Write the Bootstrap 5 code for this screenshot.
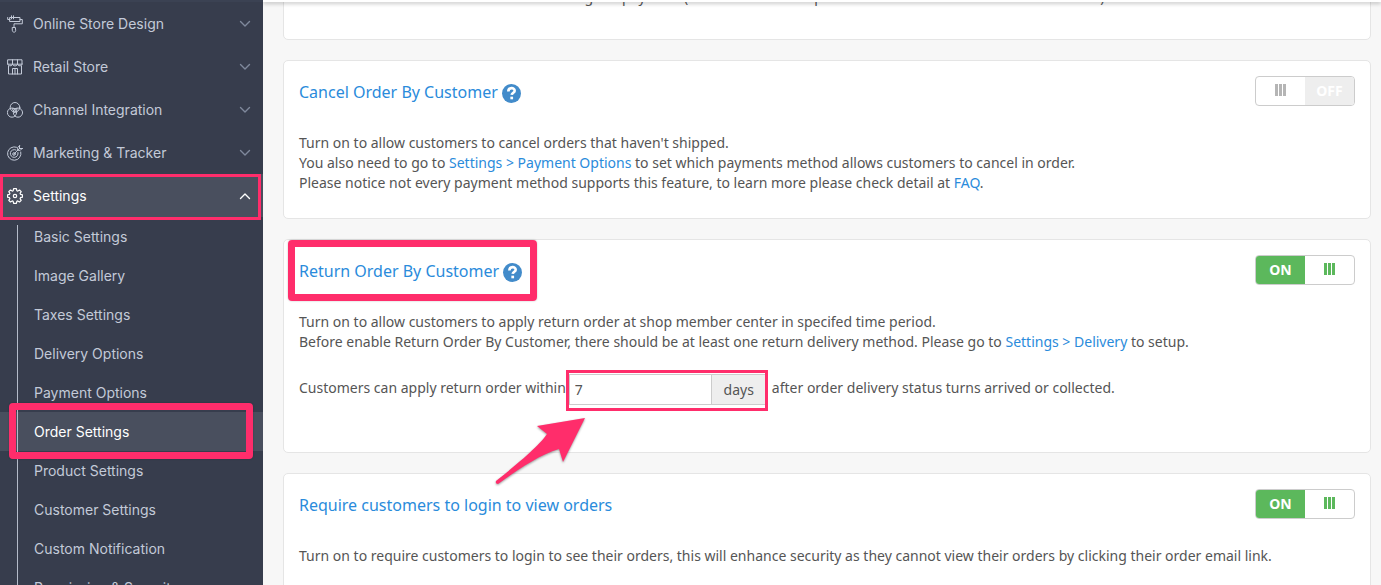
<!DOCTYPE html>
<html lang="en">
<head>
<meta charset="utf-8">
<meta name="viewport" content="width=device-width, initial-scale=1">
<title>Order Settings</title>
<link href="https://cdn.jsdelivr.net/npm/bootstrap@5.3.0/dist/css/bootstrap.min.css" rel="stylesheet">
<style>
  body { font: 14px/20px "Noto Sans", sans-serif; color: #555; background: #f7f7f7; }
  a { color: #2a8bdb; text-decoration: none; }

  /* Sidebar */
  .side { width: 263px; background: #373d4d; border-top: 2px solid #3b4253; font-family: Inter, sans-serif; }
  .side a { color: #c3cad8; }
  .side-item { height: 43px; padding: 0 12px 0 7px; gap: 10px; }
  .side-item svg { flex: none; fill: none; stroke: currentColor; stroke-linecap: round; stroke-linejoin: round; }
  .side-item .chev { color: #7f899c; stroke-width: 1.4; }
  .side-item.open, .side-item.open .chev, .side-sub a.current { color: #fff; }
  .side-item.open, .side-sub a.current { background: #494f5e; }
  .side-sub::before { content: ""; position: absolute; left: 17px; top: 8px; bottom: 0; width: 1px; background: #b4bbc9; z-index: 1; }
  .side-sub a { height: 39px; padding-left: 34px; }

  /* Content */
  .topbar { height: 2px; background: #fff; box-shadow: 0 1px 4px rgba(0,0,0,.4); z-index: 2; }
  .panels { padding: 0 10px 0 20px; gap: 20px; }
  .panel { background: #fff; border: 1px solid #e5e5e5; border-radius: 5px; padding: 15px; }
  .panel-top { margin-top: -31px; padding-bottom: 32px; }
  .panel-cancel { padding-bottom: 25px; }
  .panel-head { height: 30px; margin-bottom: 27px; }
  .panel h2 { font-size: 16px; line-height: 24px; font-weight: 400; color: #2a8bdb; gap: 4px; padding-top: 2px; }
  .help { display: flex; margin-top: 2px; }

  /* On/off switch */
  .toggle { width: 100px; height: 30px; padding: 0; border: 1px solid #ccc; border-radius: 4px; background: #fff; overflow: hidden; font-size: 14px; line-height: 28px; font-weight: 700; color: #5cb85c; }
  .toggle .word { background: #5cb85c; color: #fff; }
  .toggle.off { color: #b5b5b5; }
  .toggle.off .word { background: #eee; color: #fff; }
  .grip { width: 11px; height: 12px; background: repeating-linear-gradient(90deg, currentColor 0 3px, transparent 3px 4px); margin-bottom: 2px; }

  .days-row { line-height: 28px; margin: 22px 0 32px; }
  .days { width: 198px; height: 31px; margin: 0 5px 0 3px; }
  .days .form-control, .days .input-group-text { font-size: 14px; line-height: 20px; border-color: #ccc; border-radius: 0; color: #555; }
  .days .form-control { padding: 4px 5px; }
  .days .input-group-text { background: #eee; padding: 4px 12px; }

  /* Highlights laid over the page */
  .hl { position: absolute; border: 3px solid #ff2d6b; pointer-events: none; z-index: 3; }
  .hl.thick { border-width: 7px; border-radius: 4px; box-shadow: 0 0 2px rgba(0,0,0,.25); }
  .hl-settings { inset: 0 2px -3px 0; }
  .hl-order { inset: -9px 10px -8px 9px; }
  .hl-return { inset: -17px -15px -18px -11px; }
  .hl-days { inset: -4px -1px -6px -2px; }
  .arrow { position: absolute; right: 180px; top: 42px; z-index: 3; filter: drop-shadow(0 1px 1px rgba(0,0,0,.4)); }
</style>
</head>
<body>
<svg class="d-none">
  <symbol id="down" viewBox="0 0 12 8"><path d="M1.5 1.5 6 6l4.500-4.500"/></symbol>
  <symbol id="up" viewBox="0 0 12 8"><path d="M1.500 6.500 6 2l4.500 4.500"/></symbol>
  <symbol id="question" viewBox="0 0 18 18"><circle cx="9" cy="9" r="9" fill="#428bca"/><path d="M6 7c0-4 6-4 6-.7C12 8.300 9.400 8.200 9.200 10.400" fill="none" stroke="#fff" stroke-width="2.500"/><path d="M7.900 12h2.600v2.500H7.900z" fill="#fff"/></symbol>
</svg>
<div class="d-flex vh-100 overflow-hidden">
  <nav class="side flex-shrink-0 overflow-hidden" aria-label="Main menu">
    <a href="#" class="side-item d-flex align-items-center">
      <svg width="16" height="18" viewBox="0 0 16 18"><path d="M3 2.500h10v4H3zM3 4.500H.700v-2M4.500.800v3M6.500.800v3M13 4.500h2.300v4.300H7v3.400M5.600 12.500h2.800l.3 3.200c0 2-3.400 2-3.400 0z"/></svg>
      <span class="flex-grow-1">Online Store Design</span>
      <svg class="chev" width="12" height="8"><use href="#down"/></svg>
    </a>
    <a href="#" class="side-item d-flex align-items-center">
      <svg width="16" height="16" viewBox="0 0 16 16"><path d="M1 .800h14v4.400H1zM5.500.800v4.400M10.500.800v4.400M.700 5c0 2.500 4.800 2.500 4.800 0 0 2.500 5 2.500 5 0 0 2.500 4.800 2.500 4.800 0M1.500 7v8h13V7M5.500 15V9.500h5V15M8 10v5"/></svg>
      <span class="flex-grow-1">Retail Store</span>
      <svg class="chev" width="12" height="8"><use href="#down"/></svg>
    </a>
    <a href="#" class="side-item d-flex align-items-center">
      <svg width="16" height="16" viewBox="0 0 16 16"><circle cx="8" cy="5.300" r="4.800"/><circle cx="5" cy="10.600" r="4.600"/><circle cx="11" cy="10.600" r="4.600"/><path d="m5.700 6.700 4.600 0L8 10.500z"/></svg>
      <span class="flex-grow-1">Channel Integration</span>
      <svg class="chev" width="12" height="8"><use href="#down"/></svg>
    </a>
    <a href="#" class="side-item d-flex align-items-center">
      <svg width="16" height="16" viewBox="0 0 16 16"><path d="M9.500 2.200A6.700 6.700 0 1 0 13.800 7M9 5A3.900 3.900 0 1 0 11 7.500M7 9l5.500-5.500M12.500 3.500V.700M12.500 3.500h3M10.700 5.300V2.500l2-2M10.700 5.300h2.600l2-2"/><circle cx="7" cy="9" r="1.300"/></svg>
      <span class="flex-grow-1">Marketing &amp; Tracker</span>
      <svg class="chev" width="12" height="8"><use href="#down"/></svg>
    </a>
    <div class="position-relative">
      <a href="#" class="side-item open d-flex align-items-center" aria-expanded="true">
        <svg width="16" height="16" viewBox="0 0 16 16" stroke-width="1.200"><path d="M6.600.700h2.800l.4 2 1 .4 1.700-1.100 1.700 1.700-1.100 1.700.4 1 2 .4v2.400l-2 .4-.4 1 1.100 1.700-1.700 1.700-1.700-1.100-1 .4-.4 2H6.600l-.4-2-1-.4-1.700 1.100-1.700-1.700 1.100-1.700-.4-1-2-.4V6.800l2-.4.4-1-1.100-1.700L3.500 2l1.700 1.100 1-.4z"/><circle cx="8" cy="8" r="1.700"/></svg>
        <span class="flex-grow-1">Settings</span>
        <svg class="chev" width="12" height="8"><use href="#up"/></svg>
      </a>
      <span class="hl hl-settings"></span>
    </div>
    <div class="side-sub position-relative">
      <a href="#" class="d-flex align-items-center">Basic Settings</a>
      <a href="#" class="d-flex align-items-center">Image Gallery</a>
      <a href="#" class="d-flex align-items-center">Taxes Settings</a>
      <a href="#" class="d-flex align-items-center">Delivery Options</a>
      <a href="#" class="d-flex align-items-center">Payment Options</a>
      <div class="position-relative">
        <a href="#" class="current d-flex align-items-center" aria-current="page">Order Settings</a>
        <span class="hl thick hl-order"></span>
      </div>
      <a href="#" class="d-flex align-items-center">Product Settings</a>
      <a href="#" class="d-flex align-items-center">Customer Settings</a>
      <a href="#" class="d-flex align-items-center">Custom Notification</a>
      <a href="#" class="d-flex align-items-center">Permission &amp; Security</a>
    </div>
  </nav>

  <div class="flex-grow-1 overflow-hidden">
    <div class="topbar position-relative"></div>
    <main class="panels d-flex flex-column">
      <section class="panel panel-top">
        <p class="mb-0">Turn on to let customers return after making the payment (the orders will be updated if the customer has not checked out).</p>
      </section>

      <section class="panel panel-cancel">
        <div class="panel-head d-flex justify-content-between align-items-center">
          <h2 class="d-flex align-items-center m-0">Cancel Order By Customer <a class="help" href="#" aria-label="Help"><svg width="19" height="19"><use href="#question"/></svg></a></h2>
          <button type="button" class="toggle off d-flex" role="switch" aria-checked="false" aria-label="Cancel Order By Customer"><span class="w-50 h-100 d-flex align-items-center justify-content-center"><span class="grip"></span></span><span class="word w-50 h-100">OFF</span></button>
        </div>
        <p class="mb-0">Turn on to allow customers to cancel orders that haven't shipped.<br>You also need to go to <a href="#">Settings &gt; Payment Options</a> to set which payments method allows customers to cancel in order.<br>Please notice not every payment method supports this feature, to learn more please check detail at <a href="#">FAQ</a>.</p>
      </section>

      <section class="panel">
        <div class="panel-head d-flex justify-content-between align-items-center">
          <h2 class="position-relative d-flex align-items-center m-0">Return Order By Customer <a class="help" href="#" aria-label="Help"><svg width="19" height="19"><use href="#question"/></svg></a><span class="hl thick hl-return"></span></h2>
          <button type="button" class="toggle d-flex" role="switch" aria-checked="true" aria-label="Return Order By Customer"><span class="word w-50 h-100">ON</span><span class="w-50 h-100 d-flex align-items-center justify-content-center"><span class="grip"></span></span></button>
        </div>
        <p class="mb-0">Turn on to allow customers to apply return order at shop member center in specifed time period.<br>Before enable Return Order By Customer, there should be at least one return delivery method. Please go to <a href="#">Settings &gt; Delivery</a> to setup.</p>
        <div class="days-row d-flex">
          <label for="days">Customers can apply return order within</label>
          <div class="days input-group position-relative flex-nowrap">
            <input id="days" class="form-control" type="text" value="7">
            <span class="input-group-text">days</span>
            <span class="hl hl-days"></span>
            <svg class="arrow" width="92" height="70" viewBox="0 0 92 70" fill="#ff2d6b"><path d="M90 2 42 10l10 8C44 30 20 50 1 65q-1 3 2 3C24 53 44 39 64 33l4 13z"/></svg>
          </div>
          <span>after order delivery status turns arrived or collected.</span>
        </div>
      </section>

      <section class="panel">
        <div class="panel-head d-flex justify-content-between align-items-center">
          <h2 class="m-0">Require customers to login to view orders</h2>
          <button type="button" class="toggle d-flex" role="switch" aria-checked="true" aria-label="Require customers to login to view orders"><span class="word w-50 h-100">ON</span><span class="w-50 h-100 d-flex align-items-center justify-content-center"><span class="grip"></span></span></button>
        </div>
        <p>Turn on to require customers to login to see their orders, this will enhance security as they cannot view their orders by clicking their order email link.</p>
      </section>
    </main>
  </div>
</div>
<script src="https://cdn.jsdelivr.net/npm/bootstrap@5.3.0/dist/js/bootstrap.bundle.min.js"></script>
</body>
</html>
